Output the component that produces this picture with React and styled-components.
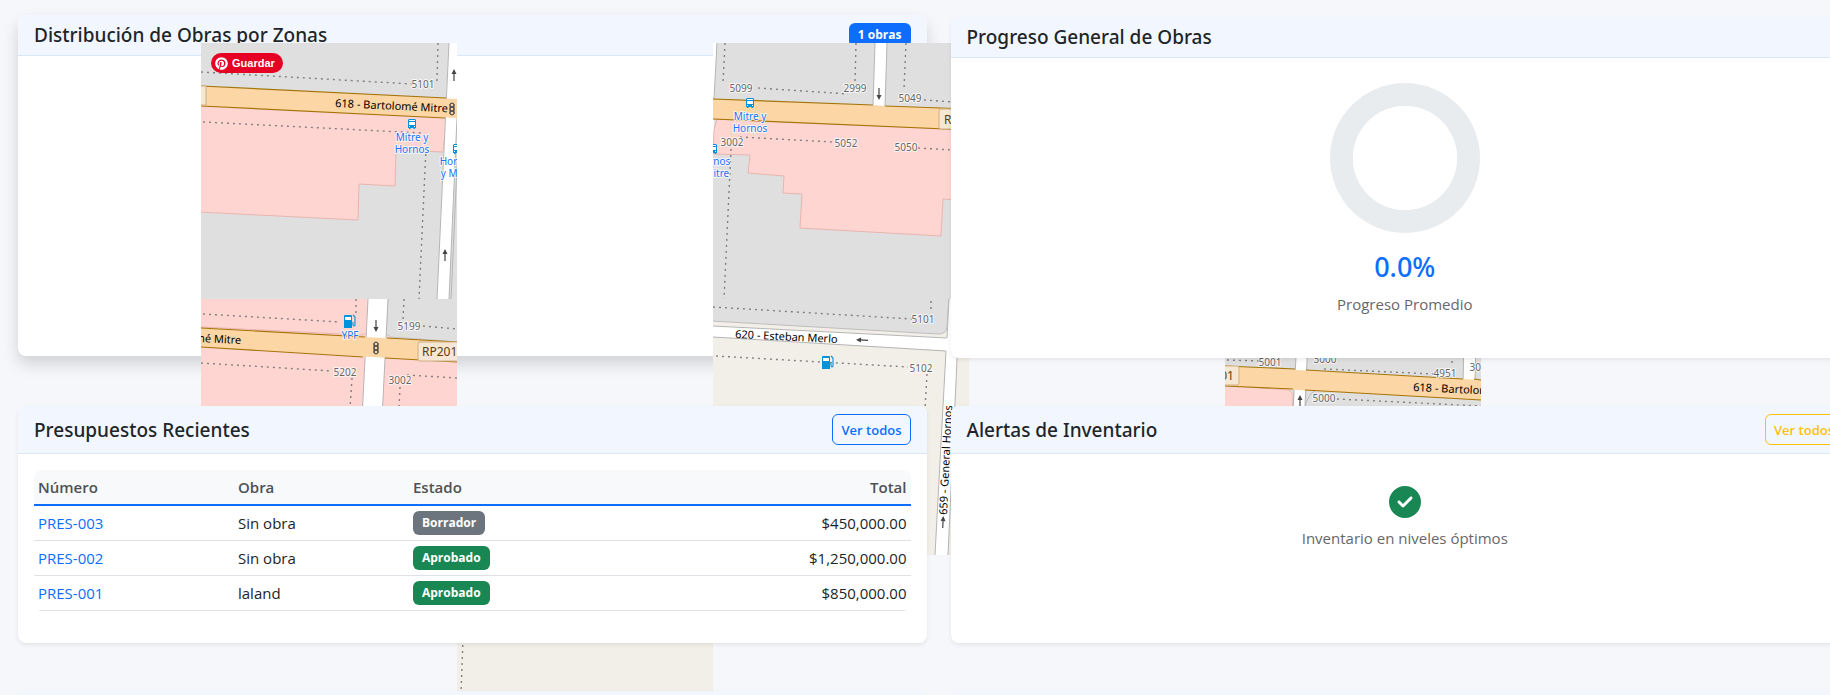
import React from "react";
import styled, { createGlobalStyle } from "styled-components";
import { FaCircleCheck, FaPinterest } from "react-icons/fa6";

const GlobalStyle = createGlobalStyle`
  * { box-sizing: border-box; }
  html, body { margin: 0; }
  body {
    background: #f5f7fb;
    color: #212529;
    font: 400 15px/24px "Open Sans", "Noto Sans", sans-serif;
    overflow: hidden;
  }
`;

const Page = styled.main`
  height: 100vh;
  overflow: hidden;
`;

const Board = styled.div`
  display: grid;
  grid-template-columns: repeat(2, minmax(0, 1fr));
  gap: 48px 24px;
  width: calc(100% + 11px);
  margin-right: -29px;
  padding: 17px 0 0 18px;
  box-sizing: content-box;
`;

const Card = styled.section`
  position: relative;
  background: #fff;
  border-radius: 8px;
  box-shadow: ${(p) => (p.$raised ? "0 8px 16px rgba(0,0,0,.15)" : "0 2px 4px rgba(0,0,0,.075)")};
  transform: ${(p) => (p.$raised ? "translateY(-2px)" : "none")};
`;

const CardHeader = styled.header`
  display: flex;
  align-items: center;
  justify-content: space-between;
  padding: 8px 16px;
  background: #f2f7ff;
  border-bottom: 1px solid #dbe7f8;
  border-radius: 8px 8px 0 0;
`;

const Title = styled.h2`
  margin: 0;
  font-family: "Noto Sans", "Open Sans", sans-serif;
  font-size: 19px;
  line-height: 24px;
  font-weight: 500;
`;

const Badge = styled.span`
  display: inline-block;
  padding: 0 9px;
  border-radius: 6px;
  background: ${(p) => p.$color};
  color: #fff;
  font-size: 12px;
  line-height: 24px;
  font-weight: 700;
  vertical-align: top;
`;

const OutlineButton = styled.button`
  height: 31px;
  padding: 0 8px;
  border: 1px solid ${(p) => p.$color};
  border-radius: 6px;
  background: transparent;
  color: ${(p) => p.$color};
  font: 600 13px/20px "Open Sans", "Noto Sans", sans-serif;
`;

const CardBody = styled.div`
  padding: 16px;
`;

const MapLayer = styled.div`
  position: absolute;
  left: 183px;
  top: 28px;
`;

const Tile = styled.svg`
  position: absolute;
  left: ${(p) => p.$col * 256}px;
  top: ${(p) => p.$row * 256}px;
  width: 256px;
  height: 256px;
`;

const SaveButton = styled.button`
  position: absolute;
  left: 10px;
  top: 10px;
  display: flex;
  align-items: center;
  gap: 4px;
  height: 20px;
  padding: 0 8px 0 4px;
  border: 0;
  border-radius: 10px;
  background: #e60023;
  color: #fff;
  font: 700 11px/20px "Liberation Sans", Arial, sans-serif;
`;

const ProgressBody = styled.div`
  display: flex;
  flex-direction: column;
  align-items: center;
  min-height: 300px;
  padding: 25px 16px;
`;

const Ring = styled.div`
  width: 150px;
  height: 150px;
  border-radius: 50%;
  background: radial-gradient(closest-side, #fff 69%, #e8ecef 70%);
`;

const Percent = styled.strong`
  margin: 16px 0 7px;
  color: #0d6efd;
  font-family: "Noto Sans", "Open Sans", sans-serif;
  font-size: 27px;
  line-height: 36px;
  font-weight: 500;
`;

const Muted = styled.p`
  margin: 0;
  color: #65686b;
`;

const Empty = styled.div`
  display: flex;
  flex-direction: column;
  align-items: center;
  gap: 8px;
  padding: 16px;
  svg { color: #198754; width: 32px; height: 32px; }
`;

const TableFrame = styled.div`
  margin-bottom: 16px;
  border-radius: 8px;
  overflow: hidden;
`;

const Table = styled.table`
  width: 100%;
  table-layout: fixed;
  border-collapse: separate;
  border-spacing: 0;
  th:nth-child(1) { width: 200px; }
  th:nth-child(2) { width: 175px; }
  th:last-child, td:last-child { text-align: right; }
`;

const Th = styled.th`
  padding: 5px 4px;
  background: #f8f9fa;
  border-bottom: 2px solid #0d6efd;
  color: #4d5154;
  font-weight: 600;
  text-align: left;
`;

const Td = styled.td`
  height: 35px;
  padding: 4px;
  border-bottom: 1px solid #dee2e6;
`;

const Link = styled.a`
  color: #0d6efd;
  text-decoration: none;
`;

const GRAY = "#dfdfdf";
const PINK = "#ffd5d1";
const LAND = "#f2efe9";

const Area = ({ pts, fill = PINK, stroke = "#e8b5b0" }) => (
  <polygon points={pts} fill={fill} stroke={stroke} />
);

const Street = ({ pts, edge }) => (
  <>
    <polygon points={pts} fill="#fff" />
    {edge && <path d={edge} fill="none" stroke="#b5b5b5" />}
  </>
);

const Avenue = ({ pts, edge }) => (
  <>
    <polygon points={pts} fill="#fcd6a4" />
    <path d={edge} fill="none" stroke="#a67408" strokeWidth="1.2" />
  </>
);

const Dots = ({ d }) => (
  <path d={d} fill="none" stroke="#808080" strokeWidth="1.4" strokeDasharray="2 4" />
);

const MapText = ({ x, y, children, size = 10, fill = "#666", anchor = "middle", turn = 0, halo = "#fff" }) => (
  <text
    x={x}
    y={y}
    transform={turn ? `rotate(${turn} ${x} ${y})` : undefined}
    textAnchor={anchor}
    fontFamily="'Noto Sans', sans-serif"
    fontSize={size}
    fill={fill}
    stroke={halo}
    strokeOpacity="0.75"
    strokeWidth={halo === "none" ? 0 : 2}
    strokeLinejoin="round"
    paintOrder="stroke"
  >
    {children}
  </text>
);

const RoadName = (p) => <MapText size={11} fill="#000" anchor="start" halo="none" {...p} />;
const StopName = (p) => <MapText fill="#1a73f5" {...p} />;

const Arrow = ({ x, y, turn = 0 }) => (
  <g transform={`translate(${x} ${y}) rotate(${turn})`}>
    <path d="M0 6V-2" stroke="#444" strokeWidth="1.2" />
    <path d="M0-6L2.5-1H-2.5Z" fill="#444" />
  </g>
);

const Signal = ({ x, y }) => (
  <g transform={`translate(${x} ${y})`}>
    <path d="M-3-4H3M-3 0H3M-3 4H3" stroke="#4a4a4a" />
    <rect x="-2" y="-6" width="4" height="12" rx="2" fill="#4a4a4a" stroke="#4a4a4a" />
    <circle cy="-4" r="1.3" fill="#fcd6a4" />
    <circle r="1.3" fill="#fcd6a4" />
    <circle cy="4" r="1.3" fill="#fcd6a4" />
  </g>
);

const Bus = ({ x, y }) => (
  <g transform={`translate(${x - 4} ${y})`}>
    <path d="M1 0h6l1 1V9H7v1H5.500V9h-3v1H1V9H0V1Z" fill="#0092da" />
    <path d="M1 1h6v1H1ZM1 3h6v3H1Z" fill="#fff" />
    <rect x="1" y="7" width="1" height="1" fill="#fff" />
    <rect x="6" y="7" width="1" height="1" fill="#fff" />
  </g>
);

const Pump = ({ x, y }) => (
  <g transform={`translate(${x} ${y})`}>
    <path d="M1 0h6q1 0 1 1v12H0V1Q0 0 1 0Z" fill="#0092da" />
    <rect x="1" y="2" width="6" height="3" fill="#fff" />
    <path d="M9 0l2 2v8q-1 2-2 0V7" fill="none" stroke="#0092da" strokeWidth="1.1" />
  </g>
);

const Shield = ({ x, y, width, height = 19, children }) => (
  <>
    <rect x={x} y={y} width={width} height={height} rx="2" fill="#f6e7d2" stroke="#d0b085" />
    {children}
  </>
);

const TileNorthWest = () => (
  <Tile $col={0} $row={0} viewBox="0 0 256 256">
    <rect width="256" height="256" fill={GRAY} />
    <Area pts="-2,60 246,72 242,109 195,107 194,143 158,141 157,177 -2,169" />
    <Street pts="248,0 256,0 256,75 248,256 236,256 245,55" edge="M248 0L236 256M256 75L248 256M258 80L250 256" />
    <Avenue pts="0,43 256,56 256,75 0,63" edge="M0 43L245 55M0 63L244 75" />
    <rect x="-2" y="43" width="7" height="19" fill="#f6e7d2" stroke="#d0b085" />
    <Dots d="M0 29L211 41M237 0L236 38M2 79L221 90M225 105L218 256" />
    <MapText x={222} y={45}>5101</MapText>
    <RoadName x={134} y={64} turn={2.7}>618 - Bartolomé Mitre</RoadName>
    <Signal x={251} y={66} />
    <Bus x={211} y={76} />
    <StopName x={211} y={98}>Mitre y</StopName>
    <StopName x={211} y={110}>Hornos</StopName>
    <Bus x={256} y={101} />
    <StopName x={256} y={122}>Hornos</StopName>
    <StopName x={256} y={134}>y Mitre</StopName>
    <Arrow x={253} y={32} />
    <Arrow x={244} y={212} />
  </Tile>
);

const TileSouthWest = () => (
  <Tile $col={0} $row={1} viewBox="0 0 256 256">
    <rect width="256" height="256" fill={PINK} />
    <Area fill={GRAY} stroke="#c4c4c4" pts="187,-2 258,-2 258,43 190,38 185,35" />
    <path d="M0 28L160 36Q164 36 164 34" fill="none" stroke="#e8b5b0" />
    <Street pts="167,0 187,0 181,120 161,120" edge="M167 0L161 120M187 0L181 120" />
    <Avenue pts="0,29 256,43 256,63 0,48" edge="M0 29L164 38M186 39L256 43M0 48L162 58M184 59L256 63" />
    <Shield x={217} y={43} width={42}>
      <MapText x={221} y={57} size={12} fill="#5c3d10" anchor="start" halo="none">RP201</MapText>
    </Shield>
    <Dots d="M2 15L139 23M155 0V14M203 0L202 20M222 27L256 30M0 64L131 72M151 79L149 110M206 76L256 79M199 88L198 110" />
    <RoadName x={40} y={45} anchor="end" turn={2.7}>618 - Bartolomé Mitre</RoadName>
    <MapText x={208} y={31}>5199</MapText>
    <MapText x={144} y={77}>5202</MapText>
    <MapText x={199} y={85}>3002</MapText>
    <Pump x={143} y={16} />
    <StopName x={149} y={40}>YPF</StopName>
    <Arrow x={175} y={27} turn={180} />
    <Signal x={175} y={49} />
  </Tile>
);

const TileNorthEast = () => (
  <Tile $col={2} $row={0} viewBox="0 0 256 256">
    <rect width="256" height="256" fill={GRAY} />
    <Street pts="0,0 4,0 1,56 1,112 0,112" edge="M4 0L1 56" />
    <Area pts="4,76 258,87 258,158 230,156 228,193 87,185 89,151 70,150 71,133 35,130 37,112 0,111 1,87" />
    <Avenue pts="0,56 256,66 256,87 0,76" edge="M0 56L160 62M172 63L256 66M0 76L256 87" />
    <Street pts="162,0 174,0 172,63 160,62" edge="M162 0L160 62M174 0L172 63" />
    <Shield x={226} y={66} width={42} height={20}>
      <MapText x={231} y={81} size={12} fill="#5c3d10" anchor="start" halo="none">RP201</MapText>
    </Shield>
    <Dots d="M12 0L10 40M45 45L135 51M143 0L142 40M193 0L191 46M211 57L256 60M27 94L120 99M205 105L256 108M18 106L11 256" />
    <MapText x={28} y={49}>5099</MapText>
    <MapText x={142} y={49}>2999</MapText>
    <MapText x={197} y={59}>5049</MapText>
    <MapText x={19} y={103}>3002</MapText>
    <MapText x={133} y={104}>5052</MapText>
    <MapText x={193} y={108}>5050</MapText>
    <Bus x={37} y={55} />
    <StopName x={37} y={77}>Mitre y</StopName>
    <StopName x={37} y={89}>Hornos</StopName>
    <Bus x={0} y={101} />
    <StopName x={0} y={122}>Hornos</StopName>
    <StopName x={0} y={134}>y Mitre</StopName>
    <Arrow x={166} y={51} turn={180} />
  </Tile>
);

const TileSouthEast = () => (
  <Tile $col={2} $row={1} viewBox="0 0 256 256">
    <rect width="256" height="256" fill={LAND} />
    <path d="M-2 22L225 35Q233 35 234 29L236 -2H-2Z" fill={GRAY} stroke="#bdbdbd" />
    <Street pts="0,27 240,39 240,52 0,38" edge="M0 27L234 39M0 38L233 52" />
    <Street pts="236,0 247,0 244,61 235,256 222,256 233,52" edge="M236 0L234 39M233 52L222 256M247 0L244 61L235 256" />
    <Dots d="M0 8L199 20M218 2V14M11 -6V0M3 57L195 68M214 75L212 110" />
    <MapText x={210} y={24}>5101</MapText>
    <MapText x={208} y={73}>5102</MapText>
    <RoadName x={22} y={39} turn={2.8}>620 - Esteban Merlo</RoadName>
    <RoadName x={234} y={216} turn={-87.300}>659 - General Hornos</RoadName>
    <Arrow x={149} y={41} turn={-87} />
    <Arrow x={230} y={223} turn={3} />
    <Pump x={109} y={57} />
  </Tile>
);

const TileSouth = () => (
  <Tile $col={1} $row={2} viewBox="0 0 256 256">
    <rect width="256" height="256" fill={LAND} />
    <Dots d="M8 30L4 138" />
  </Tile>
);

const TileFarEast = () => (
  <Tile $col={4} $row={1} viewBox="0 0 256 256">
    <rect width="256" height="256" fill={GRAY} />
    <Area pts="-2,86 64,91 68,95 67,130 -2,130" />
    <path d="M80 107Q84 94 90 92" fill="none" stroke="#bbb" />
    <Street pts="72,40 83,40 79,130 67,130" edge="M72 40L67 130M83 40L79 130" />
    <Street pts="239,40 251,40 250,84 238,84" edge="M239 40L238 84M251 40L250 84" />
    <Avenue pts="0,67 256,81 256,101 0,87" edge="M0 67L70 70M81 71L238 80M249 80L256 81M0 87L68 90M80 91L256 101" />
    <Shield x={-24} y={67} width={38}>
      <MapText x={9} y={81} size={12} fill="#5c3d10" anchor="end" halo="none">RP201</MapText>
    </Shield>
    <Dots d="M2 61L34 62M99 70L209 75M227 50V66M112 100L256 107" />
    <MapText x={45} y={67}>5001</MapText>
    <MapText x={100} y={64}>3000</MapText>
    <MapText x={220} y={78}>4951</MapText>
    <MapText x={256} y={72}>3000</MapText>
    <MapText x={99} y={103}>5000</MapText>
    <RoadName x={188} y={92} turn={2.7}>618 - Bartolomé Mitre</RoadName>
    <Arrow x={75} y={102} />
  </Tile>
);

const budgets = [
  { id: "PRES-003", work: "Sin obra", state: "Borrador", color: "#6c757d", total: "$450,000.00" },
  { id: "PRES-002", work: "Sin obra", state: "Aprobado", color: "#198754", total: "$1,250,000.00" },
  { id: "PRES-001", work: "laland", state: "Aprobado", color: "#198754", total: "$850,000.00" },
];

export default function App() {
  return (
    <Page>
      <GlobalStyle />
      <Board>
        <Card $raised>
          <CardHeader>
            <Title>Distribución de Obras por Zonas</Title>
            <Badge $color="#0d6efd">1 obras</Badge>
          </CardHeader>
          <MapLayer>
            <TileNorthWest />
            <TileSouthWest />
            <TileNorthEast />
            <TileSouthEast />
            <TileSouth />
            <TileFarEast />
            <SaveButton type="button">
              <FaPinterest size={13} />
              Guardar
            </SaveButton>
          </MapLayer>
        </Card>

        <Card>
          <CardHeader>
            <Title>Progreso General de Obras</Title>
          </CardHeader>
          <ProgressBody>
            <Ring />
            <Percent>0.0%</Percent>
            <Muted>Progreso Promedio</Muted>
          </ProgressBody>
        </Card>

        <Card>
          <CardHeader>
            <Title>Presupuestos Recientes</Title>
            <OutlineButton type="button" $color="#0d6efd">Ver todos</OutlineButton>
          </CardHeader>
          <CardBody>
            <TableFrame>
              <Table>
                <thead>
                  <tr>
                    <Th>Número</Th>
                    <Th>Obra</Th>
                    <Th>Estado</Th>
                    <Th>Total</Th>
                  </tr>
                </thead>
                <tbody>
                  {budgets.map((b) => (
                    <tr key={b.id}>
                      <Td><Link href="#">{b.id}</Link></Td>
                      <Td>{b.work}</Td>
                      <Td><Badge $color={b.color}>{b.state}</Badge></Td>
                      <Td>{b.total}</Td>
                    </tr>
                  ))}
                </tbody>
              </Table>
            </TableFrame>
          </CardBody>
        </Card>

        <Card>
          <CardHeader>
            <Title>Alertas de Inventario</Title>
            <OutlineButton type="button" $color="#ffc107">Ver todos</OutlineButton>
          </CardHeader>
          <CardBody>
            <Empty>
              <FaCircleCheck />
              <Muted>Inventario en niveles óptimos</Muted>
            </Empty>
          </CardBody>
        </Card>

        <Card><CardHeader /></Card>
        <Card><CardHeader /></Card>
      </Board>
    </Page>
  );
}
